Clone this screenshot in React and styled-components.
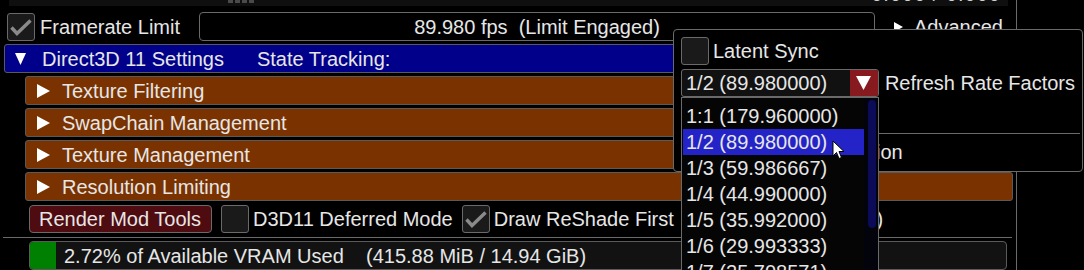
import React from 'react';
import styled, { createGlobalStyle } from 'styled-components';

const GlobalStyle = createGlobalStyle`
  html, body {
    margin: 0;
    padding: 0;
    background: #000;
  }
  body {
    font-family: "Liberation Sans", Arial, sans-serif;
    color: #e6e6e6;
    overflow: hidden;
  }
`

const Screen = styled.div`
  position: relative;
  width: 1084px;
  height: 270px;
  overflow: hidden;
  background: #000;
  font-size: 20px;
  line-height: 1;
`

const MainWindow = styled.div`
  width: 1016px;
  height: 270px;
  border-right: 1px solid #6a6a6a;
  display: flex;
  flex-direction: column;
`

const TopStrip = styled.div`
  margin-left: 9px;
  width: 999px;
  height: 6px;
  background: #0f0f0f;
  display: flex;
  align-items: flex-start;
  overflow: hidden;
`
const Dots = styled.div`
  margin-left: 219px;
  display: flex;
  gap: 2px;
  span {
    width: 5px;
    height: 3px;
    background: #4a4a4a;
  }
`
const TopReadout = styled.div`
  margin-left: auto;
  margin-right: 7px;
  margin-top: -16px;
  line-height: 20px;
  color: #cfcfcf;
  letter-spacing: 1px;
`

const Row = styled.div`
  display: flex;
  align-items: center;
  height: 29px;
  margin-top: ${p => p.top || 3}px;
  padding-left: ${p => p.indent || 0}px;
  flex-shrink: 0;
`

const Box = styled.div`
  width: 28px;
  height: 28px;
  box-sizing: border-box;
  border: 1px solid #6a6a6a;
  border-radius: 3px;
  background: #1a1a1a;
  margin-left: ${p => p.gap || 0}px;
  flex-shrink: 0;
  svg { display: block; }
`

const Label = styled.span`
  margin-left: ${p => p.gap ?? 4}px;
  white-space: nowrap;
`

const FpsField = styled.div`
  margin-left: 19px;
  width: 676px;
  height: 29px;
  box-sizing: border-box;
  border: 1px solid #6a6a6a;
  border-radius: 4px;
  background: #000;
  display: flex;
  align-items: center;
  justify-content: center;
  white-space: pre;
`

const Advanced = styled.div`
  margin-left: 19px;
  display: flex;
  align-items: center;
  span { margin-left: 11px; }
`

const TreeHeader = styled.div`
  margin-left: ${p => p.indent}px;
  width: ${p => p.width}px;
  height: 29px;
  box-sizing: border-box;
  border: 1px solid #5a5a5a;
  border-radius: 3px;
  background: ${p => p.color};
  display: flex;
  align-items: center;
  padding-left: ${p => p.pad}px;
  white-space: nowrap;
`

const HeaderText = styled.span`
  margin-left: ${p => p.gap}px;
`

const RedButton = styled.div`
  width: 183px;
  height: 28px;
  box-sizing: border-box;
  border: 1px solid #6a6a6a;
  border-radius: 4px;
  background: #4e0b10;
  display: flex;
  align-items: center;
  padding-left: 9px;
  white-space: nowrap;
`

const Separator = styled.div`
  height: 1px;
  background: #6a6a6a;
  margin: 4px 0 0 3px;
  width: 1009px;
  flex-shrink: 0;
`

const VramBar = styled.div`
  margin: 3px 0 0 29px;
  width: 978px;
  height: 29px;
  box-sizing: border-box;
  border: 1px solid #5a5a5a;
  border-radius: 4px;
  background: #121212;
  display: flex;
  align-items: center;
  overflow: hidden;
  white-space: pre;
  flex-shrink: 0;
`
const VramFill = styled.div`
  align-self: stretch;
  background: #008000;
  flex-shrink: 0;
`

const Popup = styled.div`
  position: absolute;
  left: 673px;
  top: 29px;
  width: 410px;
  height: 143px;
  box-sizing: border-box;
  border: 1px solid #6a6a6a;
  border-radius: 4px;
  background: #000;
  padding: 7px 7px 0 7px;
  display: flex;
  flex-direction: column;
`

const PopupRow = styled.div`
  display: flex;
  align-items: center;
  height: 28px;
  margin-top: ${p => p.top || 0}px;
  white-space: nowrap;
  flex-shrink: 0;
`

const Combo = styled.div`
  width: 198px;
  height: 28px;
  box-sizing: border-box;
  border: 1px solid #6a6a6a;
  border-radius: 3px;
  background: #111;
  display: flex;
  align-items: center;
  padding-left: 4px;
  overflow: hidden;
`
const ComboArrow = styled.div`
  margin-left: auto;
  width: 28px;
  align-self: stretch;
  background: #861a1f;
  display: flex;
  align-items: center;
  justify-content: center;
`

const PopupSeparator = styled.div`
  height: 1px;
  background: #6a6a6a;
  margin: 4px -5px 0 0;
  flex-shrink: 0;
`

const DropList = styled.div`
  position: absolute;
  left: 681px;
  top: 97px;
  width: 198px;
  height: 200px;
  box-sizing: border-box;
  border: 1px solid #6a6a6a;
  background: #050505;
  display: flex;
`
const Items = styled.div`
  width: 181px;
  padding: 5px 0 0 1px;
  display: flex;
  flex-direction: column;
`
const Item = styled.div`
  height: 26px;
  display: flex;
  align-items: center;
  padding-left: 3px;
  background: ${p => (p.active ? '#2323c8' : 'transparent')};
  white-space: nowrap;
`
const ScrollTrack = styled.div`
  flex: 1;
  background: #03030c;
  padding: 2px 0 0 4px;
`
const ScrollThumb = styled.div`
  width: 8px;
  height: 128px;
  border-radius: 4px;
  background: #0b0b58;
`

const Cursor = styled.svg`
  position: absolute;
  left: 832px;
  top: 140px;
`

const Check = () => (
  <svg width="26" height="26" viewBox="0 0 26 26">
    <path d="M3.5 13.5 L9 19.5 L22.5 6.5" fill="none" stroke="#8a8a8a" strokeWidth="3.4" />
  </svg>
)

const TriRight = ({ w = 13, h = 14 }) => (
  <svg width={w} height={h} viewBox={`0 0 ${w} ${h}`}>
    <polygon points={`0,0 ${w},${h / 2} 0,${h}`} fill="#fff" />
  </svg>
)

const TriDown = ({ w = 11, h = 12 }) => (
  <svg width={w} height={h} viewBox={`0 0 ${w} ${h}`}>
    <polygon points={`0,0 ${w},0 ${w / 2},${h}`} fill="#fff" />
  </svg>
)

const sections = ['Texture Filtering', 'SwapChain Management', 'Texture Management', 'Resolution Limiting']
const factors = [
  '1:1 (179.960000)',
  '1/2 (89.980000)',
  '1/3 (59.986667)',
  '1/4 (44.990000)',
  '1/5 (35.992000)',
  '1/6 (29.993333)',
  '1/7 (25.708571)',
]

const App = () => {
  const vramPct = 2.72
  return (
    <>
      <GlobalStyle />
      <Screen>
        <MainWindow>
          <TopStrip>
            <Dots><span /><span /><span /><span /></Dots>
            <TopReadout>0.000 / 0.000</TopReadout>
          </TopStrip>

          <Row top={6} indent={7}>
            <Box><Check /></Box>
            <Label gap={5}>Framerate Limit</Label>
            <FpsField>89.980 fps  (Limit Engaged)</FpsField>
            <Advanced>
              <TriRight w={9} h={10} />
              <span>Advanced</span>
            </Advanced>
          </Row>

          <Row>
            <TreeHeader indent={4} width={1008} color="#00008a" pad={10}>
              <TriDown />
              <HeaderText gap={16}>Direct3D 11 Settings</HeaderText>
              <HeaderText gap={33}>State Tracking:</HeaderText>
            </TreeHeader>
          </Row>

          {sections.map(name => (
            <Row key={name}>
              <TreeHeader indent={25} width={988} color="#7a3300" pad={11}>
                <TriRight />
                <HeaderText gap={12}>{name}</HeaderText>
              </TreeHeader>
            </Row>
          ))}

          <Row indent={29}>
            <RedButton>Render Mod Tools</RedButton>
            <Box gap={9} />
            <Label>D3D11 Deferred Mode</Label>
            <Box gap={9}><Check /></Box>
            <Label>Draw ReShade First</Label>
            <Label gap={46}>(Requires Restart)</Label>
          </Row>

          <Separator />

          <VramBar>
            <VramFill style={{ width: `${Math.round(vramPct * 9.6)}px` }} />
            <span style={{ marginLeft: 8 }}>2.72% of Available VRAM Used    (415.88 MiB / 14.94 GiB)</span>
          </VramBar>
        </MainWindow>

        <Popup>
          <PopupRow>
            <Box />
            <Label>Latent Sync</Label>
          </PopupRow>
          <PopupRow top={4}>
            <Combo>
              <span>1/2 (89.980000)</span>
              <ComboArrow><TriDown w={15} h={14} /></ComboArrow>
            </Combo>
            <Label gap={6}>Refresh Rate Factors</Label>
          </PopupRow>
          <PopupRow top={4} />
          <PopupSeparator />
          <PopupRow top={4}>
            <Label gap={2}>Adaptive Tear Correction</Label>
          </PopupRow>
        </Popup>

        <DropList>
          <Items>
            {factors.map((f, i) => (
              <Item key={f} active={i === 1}>{f}</Item>
            ))}
          </Items>
          <ScrollTrack>
            <ScrollThumb />
          </ScrollTrack>
        </DropList>

        <Cursor width="13" height="20" viewBox="0 0 13 20">
          <path d="M1 1 L1 16 L4.5 12.5 L7 18.5 L9.5 17.5 L7 11.5 L12 11.5 Z" fill="#fff" stroke="#000" strokeWidth="1" />
        </Cursor>
      </Screen>
    </>
  )
}

export default App
